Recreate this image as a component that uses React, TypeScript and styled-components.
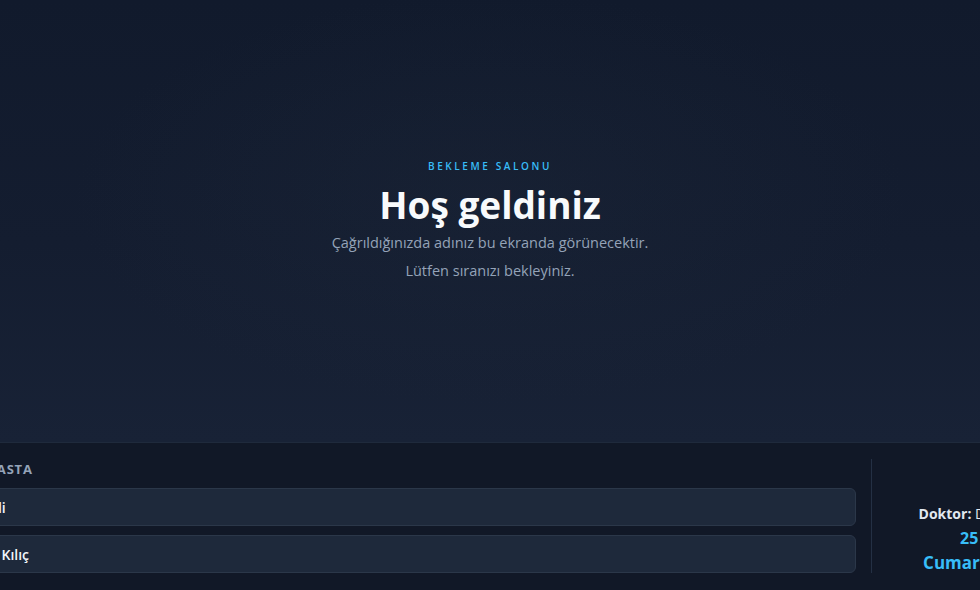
import React from "react";
import styled, { createGlobalStyle } from "styled-components";

const GlobalStyle = createGlobalStyle`
  html, body {
    margin: 0;
    padding: 0;
    background: #111827;
    overflow: hidden;
  }
  body {
    font-family: "Open Sans", "Noto Sans", sans-serif;
  }
`;

const Screen = styled.div`
  display: flex;
  flex-direction: column;
  width: 980px;
  height: 590px;
  overflow: hidden;
`;

const Hero = styled.section`
  flex: 0 0 443px;
  display: flex;
  flex-direction: column;
  align-items: center;
  justify-content: center;
  padding-bottom: 2px;
  box-sizing: border-box;
  background:
    radial-gradient(ellipse at 50% 45%, rgba(30, 41, 59, 0.35), transparent 60%),
    linear-gradient(180deg, #111a2c 0%, #141d30 55%, #182236 100%);
  border-bottom: 1px solid #1f2a3c;
`;

const Eyebrow = styled.div`
  font-size: 10px;
  font-weight: 600;
  letter-spacing: 2.6px;
  color: #38bdf8;
  text-transform: uppercase;
`;

const Title = styled.h1`
  margin: 10px 0 4px;
  font-size: 37px;
  font-weight: 700;
  line-height: 1.2;
  color: #f8fafc;
`;

const Lead = styled.p<{ $top?: number }>`
  margin: ${(p) => p.$top ?? 0}px 0 0;
  font-size: 14.5px;
  line-height: 1.4;
  color: #94a3b8;
`;

const BottomWrap = styled.section`
  flex: 1;
  display: flex;
  justify-content: center;
  background: #111827;
`;

const BottomRow = styled.div`
  flex: 0 0 1240px;
  display: flex;
  padding: 16px 0 17px 45px;
  box-sizing: border-box;
`;

const QueueColumn = styled.div`
  flex: 1;
  display: flex;
  flex-direction: column;
  padding-right: 15px;
`;

const QueueLabel = styled.div`
  font-size: 13px;
  font-weight: 700;
  letter-spacing: 0.8px;
  color: #94a3b8;
  text-transform: uppercase;
  margin: 1px 0 10px;
`;

const QueueList = styled.div`
  display: flex;
  flex-direction: column;
  gap: 9px;
`;

const QueueCard = styled.div`
  height: 38px;
  display: flex;
  align-items: center;
  padding: 0 16px;
  box-sizing: border-box;
  background: #1e293b;
  border: 1px solid #2b3749;
  border-radius: 6px;
  color: #f1f5f9;
  font-size: 14px;
  font-weight: 600;
`;

const InfoColumn = styled.div`
  flex: 0 0 238px;
  display: flex;
  flex-direction: column;
  align-items: center;
  justify-content: flex-end;
  border-left: 1px solid #243044;
  text-align: center;
`;

const Doctor = styled.div`
  font-size: 14px;
  line-height: 19px;
  color: #e2e8f0;
  margin-bottom: 6px;

  strong {
    font-weight: 700;
  }
`;

const DateLine = styled.div`
  font-size: 16px;
  font-weight: 700;
  color: #38bdf8;
  line-height: 1.2;
`;

const DayLine = styled.div`
  font-size: 17px;
  font-weight: 700;
  color: #38bdf8;
  line-height: 1.2;
  margin-top: 4px;
`;

const queue = ["Elif Demirli", "Ahmet Ali Kılıç"];

export default function App() {
  return (
    <>
      <GlobalStyle />
      <Screen>
        <Hero>
          <Eyebrow>Bekleme Salonu</Eyebrow>
          <Title>Hoş geldiniz</Title>
          <Lead $top={2}>Çağrıldığınızda adınız bu ekranda görünecektir.</Lead>
          <Lead $top={8}>Lütfen sıranızı bekleyiniz.</Lead>
        </Hero>
        <BottomWrap>
          <BottomRow>
            <QueueColumn>
              <QueueLabel>Sıradaki Hasta</QueueLabel>
              <QueueList>
                {queue.map((name) => (
                  <QueueCard key={name}>{name}</QueueCard>
                ))}
              </QueueList>
            </QueueColumn>
            <InfoColumn>
              <Doctor>
                <strong>Doktor:</strong> Dr. Ayşe Kaya
              </Doctor>
              <DateLine>25 Ekim</DateLine>
              <DayLine>Cumartesi 14:30</DayLine>
            </InfoColumn>
          </BottomRow>
        </BottomWrap>
      </Screen>
    </>
  );
}
